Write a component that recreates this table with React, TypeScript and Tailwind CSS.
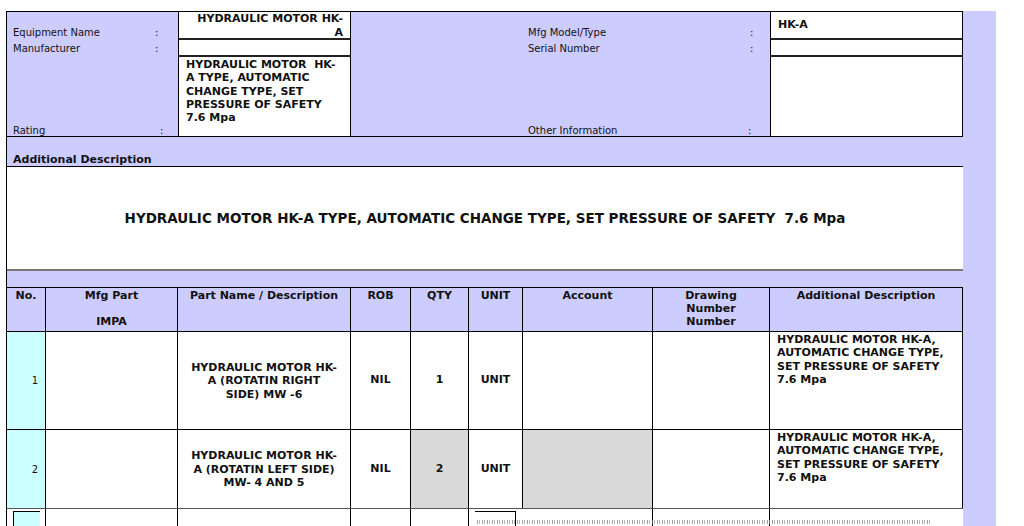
import React from 'react';

const purple = 'bg-[#ccccff]';

const Label = ({ text, w }: { text: string; w: string }) => (
  <div className="flex text-[10px] leading-[14px]">
    <span className={w}>{text}</span>
    <span>:</span>
  </div>
);

const cols = 'grid grid-cols-[39px_132px_173px_60px_58px_54px_130px_117px_193px]';

const rows = [
  {
    no: '1',
    part: ['HYDRAULIC MOTOR HK-', 'A (ROTATIN RIGHT', 'SIDE) MW -6'],
    qty: '1',
    shaded: false,
    h: 'h-[98px] border-b border-black',
  },
  {
    no: '2',
    part: ['HYDRAULIC MOTOR HK-', 'A (ROTATIN LEFT SIDE)', 'MW- 4 AND 5'],
    qty: '2',
    shaded: true,
    h: 'h-[79px] border-b border-[#555]',
  },
];

const addDesc = ['HYDRAULIC MOTOR HK-A,', 'AUTOMATIC CHANGE TYPE,', 'SET PRESSURE OF SAFETY', '7.6 Mpa'];

const App: React.FC = () => {
  return (
    <div className="w-[1024px] h-[526px] overflow-hidden bg-white text-[#111] font-['DejaVu_Sans',sans-serif]">
      <div className="flex h-full pt-[11px] pl-[6px]">
        <div className={`w-[957px] shrink-0 ${purple} border-l border-black flex flex-col`}>
          {/* Equipment header */}
          <div className="shrink-0 grid grid-cols-[171px_173px_419px_193px] h-[126px] border-t border-b border-black">
            <div className="flex flex-col pl-[6px]">
              <div className="h-[28px] flex items-end">
                <Label text="Equipment Name" w="w-[142px]" />
              </div>
              <div className="h-[17px] flex items-center">
                <Label text="Manufacturer" w="w-[142px]" />
              </div>
              <div className="flex-1 flex items-end -mb-[2px]">
                <Label text="Rating" w="w-[147px]" />
              </div>
            </div>

            <div className="bg-white border-x border-black flex flex-col font-bold text-[11px]">
              <div className="h-[28px] border-b-2 border-[#222] text-right pr-[7px] leading-[14px]">
                HYDRAULIC MOTOR HK-
                <br />A
              </div>
              <div className="h-[17px] border-b-2 border-[#222]" />
              <div className="flex-1 pl-[7px] pt-[1px] leading-[13.3px] whitespace-pre">
                {'HYDRAULIC MOTOR  HK-'}
                <br />A TYPE, AUTOMATIC
                <br />CHANGE TYPE, SET
                <br />PRESSURE OF SAFETY
                <br />7.6 Mpa
              </div>
            </div>

            <div className="flex flex-col pl-[177px]">
              <div className="h-[28px] flex items-end">
                <Label text="Mfg Model/Type" w="w-[222px]" />
              </div>
              <div className="h-[17px] flex items-center">
                <Label text="Serial Number" w="w-[222px]" />
              </div>
              <div className="flex-1 flex items-end -mb-[2px]">
                <Label text="Other Information" w="w-[220px]" />
              </div>
            </div>

            <div className="bg-white border-x border-black flex flex-col font-bold text-[11px]">
              <div className="h-[28px] border-b-2 border-[#222] flex items-center pl-[7px]">HK-A</div>
              <div className="h-[17px] border-b-2 border-[#222]" />
              <div className="flex-1" />
            </div>
          </div>

          {/* Additional description */}
          <div className="shrink-0 h-[29px] flex items-end pl-[6px]">
            <span className="font-bold text-[11px] leading-[13px]">Additional Description</span>
          </div>
          <div className="shrink-0 h-[105px] bg-white border-t border-black border-b-2 border-b-[#777] flex items-center justify-center">
            <span className="font-bold text-[13.5px] whitespace-pre">
              {'HYDRAULIC MOTOR HK-A TYPE, AUTOMATIC CHANGE TYPE, SET PRESSURE OF SAFETY  7.6 Mpa'}
            </span>
          </div>
          <div className="shrink-0 h-[16px]" />

          {/* Parts table */}
          <div className="shrink-0 border-t border-black text-[11px]">
            <div className={`${cols} h-[44px] border-b border-black font-bold text-center leading-[13px]`}>
              <div className="border-r border-black pt-[1px]">No.</div>
              <div className="border-r border-black pt-[1px]">
                Mfg Part
                <br />
                <br />
                IMPA
              </div>
              <div className="border-r border-black pt-[1px]">Part Name / Description</div>
              <div className="border-r border-black pt-[1px]">ROB</div>
              <div className="border-r border-black pt-[1px]">QTY</div>
              <div className="border-r border-black pt-[1px]">UNIT</div>
              <div className="border-r border-black pt-[1px]">Account</div>
              <div className="border-r border-black pt-[1px]">
                Drawing
                <br />
                Number
                <br />
                Number
              </div>
              <div className="border-r border-black pt-[1px]">Additional Description</div>
            </div>

            {rows.map((r) => (
              <div key={r.no} className={`${cols} ${r.h} bg-white font-bold`}>
                <div className="bg-[#ccffff] border-r border-black flex items-center justify-end pr-[7px] font-normal text-[10px]">
                  {r.no}
                </div>
                <div className="border-r border-black" />
                <div className="border-r border-black flex items-center justify-center text-center leading-[13.5px] pt-[1px]">
                  <div>
                    {r.part[0]}
                    <br />
                    {r.part[1]}
                    <br />
                    {r.part[2]}
                  </div>
                </div>
                <div className="border-r border-black flex items-center justify-center">NIL</div>
                <div
                  className={`border-r border-black flex items-center justify-center ${
                    r.shaded ? 'bg-[#d9d9d9]' : ''
                  }`}
                >
                  {r.qty}
                </div>
                <div className="border-r border-black flex items-center justify-center">UNIT</div>
                <div className={`border-r border-black ${r.shaded ? 'bg-[#d9d9d9]' : ''}`} />
                <div className="border-r border-black" />
                <div className="border-r border-black pl-[7px] pt-[1px] leading-[13.3px]">
                  {addDesc.map((l) => (
                    <div key={l}>{l}</div>
                  ))}
                </div>
              </div>
            ))}

            {/* partially visible third row */}
            <div className={`${cols} h-[40px] bg-white relative`}>
              <div className="border-r border-black pl-[6px] pt-[2px]">
                <div className="h-full w-[27px] bg-[#ccffff] border-l border-t border-black" />
              </div>
              <div className="border-r border-black" />
              <div className="border-r border-black" />
              <div className="border-r border-black" />
              <div className="border-r border-black" />
              <div className="pl-[6px] pt-[2px]">
                <div className="h-full w-[41px] border-t border-r border-black" />
              </div>
              <div className="border-r border-black" />
              <div className="border-r border-black" />
              <div />
              <div className="absolute left-[470px] top-[11px] w-[455px] h-[4px] bg-[repeating-linear-gradient(90deg,#777_0_1px,transparent_1px_2px,#999_2px_3px,transparent_3px_5px)] opacity-70" />
            </div>
          </div>
        </div>
        <div className={`w-[33px] h-full ${purple}`} />
      </div>
    </div>
  );
};

export default App;
